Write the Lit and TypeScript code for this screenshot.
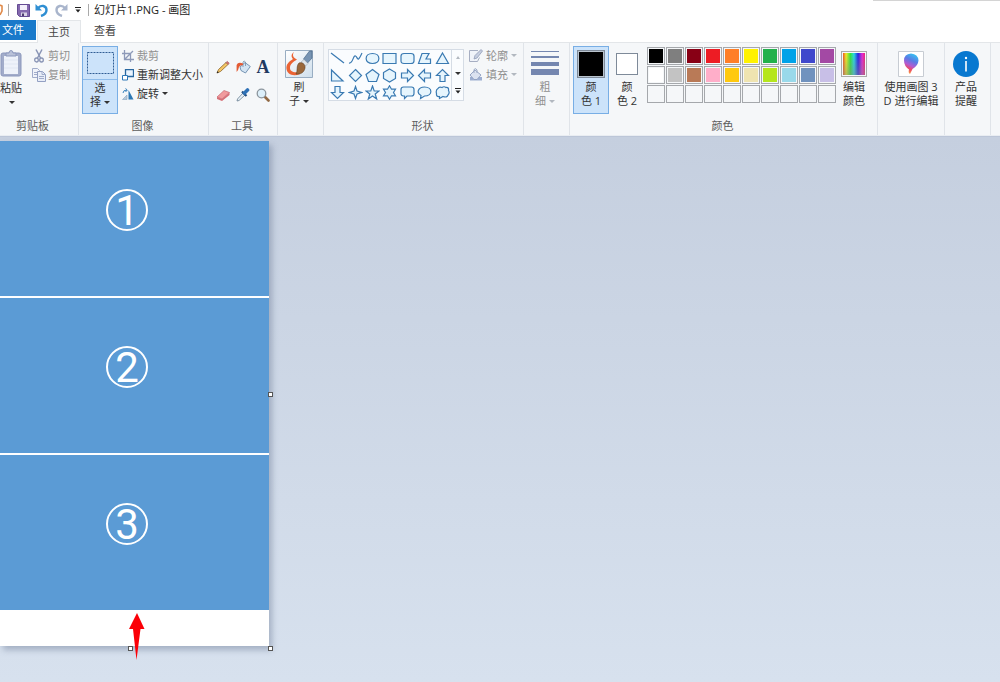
import { LitElement, html, css, svg, nothing, TemplateResult } from "lit";
import { customElement, property } from "lit/decorators.js";

const icon = (w: number, h: number, body: unknown) =>
  html`<svg width=${w} height=${h} viewBox="0 0 ${w} ${h}" fill="none" aria-hidden="true">${body}</svg>`;

const icons = {
  app: icon(3, 14, svg`<path d="M0 2L2 3V8L0 12" stroke="#e08a4a" stroke-width="1.6"/>`),
  save: icon(13, 13, svg`<path d="M.5.5h12v12H2.5l-2-2z" fill="#8468ae" stroke="#654b93"/><path d="M3 1h7v5H3z" fill="#f3effa"/><path d="M4 8.500h6V12H4z" fill="#d9d2e6"/><path d="M5 9.500h2V12H5z" fill="#4d3b70"/>`),
  undo: icon(14, 14, svg`<path d="M.5 1V7.500H7z" fill="#2f8fd3"/><path d="M3 5C6 1.500 11.500 2.500 11.500 7C11.500 10.500 9 12 6 13" stroke="#2f8fd3" stroke-width="2.400"/>`),
  redo: icon(14, 14, svg`<path d="M13.500 1V7.500H7z" fill="#a9b5cc"/><path d="M11 5C8 1.500 2.500 2.500 2.500 7C2.500 10.500 5 12 8 13" stroke="#a9b5cc" stroke-width="2.400"/>`),
  more: icon(8, 6, svg`<path d="M1 .5h6" stroke="#222"/><path d="M1.500 2.500h5L4 5.500z" fill="#222"/>`),
  paste: icon(22, 28, svg`<rect x="1" y="3" width="20" height="23" rx="2" fill="#a2acca" stroke="#8c98bd"/><path d="M4 6h14v18H4z" fill="#eef2fa"/><path d="M4 10h14M4 14h14M4 18h14" stroke="#e0e6f2"/><path d="M6 6V3h3Q9 .5 11 .5T13 3h3v3z" fill="#b9c1d8" stroke="#8c98bd"/>`),
  cut: icon(14, 14, svg`<path d="M4 .5L8.500 9M10 .5L5.500 9" stroke="#8894b5" stroke-width="1.500"/><ellipse cx="4.500" cy="11" rx="1.800" ry="2" stroke="#8894b5" stroke-width="1.300"/><ellipse cx="9.500" cy="11" rx="1.800" ry="2" stroke="#8894b5" stroke-width="1.300"/>`),
  copy: icon(14, 14, svg`<path d="M.5.5h5l2 2v7h-7z" fill="#f0f3fa" stroke="#a1acca"/><path d="M5.500 3.500h5l3 3v7h-8z" fill="#e9eef8" stroke="#93a0c3"/><path d="M10 3.500v3h3M7 8.500h5M7 10.500h5M2 4.500h3M2 6.500h3" stroke="#a1acca"/>`),
  select: icon(27, 22, svg`<rect x=".5" y=".5" width="26" height="21" stroke="#305d94" stroke-dasharray="2 1"/>`),
  crop: icon(12, 12, svg`<path d="M2.500 0v9.500H12M0 3.500h8.500V12M3 9l8-8" stroke="#8d99b8" stroke-width="1.300"/>`),
  resize: icon(12, 12, svg`<path d="M3.500.5h8v7h-8z" fill="#eaf4fe" stroke="#29679f" stroke-width="1.300"/><path d="M.5 6.500h5v4.500h-5z" fill="#fff" stroke="#2e78b8"/>`),
  rotate: icon(12, 12, svg`<path d="M6.500 11.500V2l5 9.500z" fill="#2c78b4"/><path d="M5 11.500V7L.5 11.500z" fill="#b8cadb" stroke="#86a3be" stroke-width=".6"/><path d="M1 5Q1 2 5 2M3.500.5L5.300 2 3.500 4" stroke="#3b83bd"/>`),
  pencil: icon(14, 14, svg`<path d="M1 13l1.500-3.500L10 2.500l2 2L4.500 11.500z" fill="#f5c765" stroke="#8a632c" stroke-width=".8"/><path d="M10 2.500l1.300-1.200 2 2L12 4.500z" fill="#d77070" stroke="#94585a" stroke-width=".5"/><path d="M.7 13.300l.8-2 1.300 1.200z" fill="#222"/>`),
  fill: icon(15, 14, svg`<path d="M4 7l5-4.500 5.300 4L9.500 13 5 10.500z" fill="#d3e4f3" stroke="#5a7ea2" stroke-width=".8"/><path d="M7 7V2Q8 0 9.500 2v4" stroke="#7590aa" stroke-width=".8"/><path d="M7 3.500Q2 1.500 .6 5V12Q2.500 10 3 7Q4 5 7 5z" fill="#e35b35"/>`),
  eraser: icon(14, 14, svg`<path d="M1 9l7-6.500 5.500 2L6 11z" fill="#f19a9d" stroke="#bd5b65" stroke-width=".6"/><path d="M1 9l5 2v2L1 11zM6 11l7.500-6.500v2.500L6 13z" fill="#d66f77"/>`),
  picker: icon(14, 14, svg`<path d="M7 5L1.500 11 1 13l2-.5L9 7" fill="#e8f1f8" stroke="#667c91" stroke-width=".8"/><path d="M6 3.500L10.500 8" stroke="#244f80" stroke-width="2.200"/><path d="M8.500 5l3-3" stroke="#2e71b6" stroke-width="3.600" stroke-linecap="round"/>`),
  zoom: icon(14, 14, svg`<path d="M9 9l3.500 3.500" stroke="#916944" stroke-width="2.600" stroke-linecap="round"/><circle cx="5.500" cy="5.500" r="4.300" fill="#dceffa" stroke="#8b959d" stroke-width="1.300"/>`),
  brush: icon(28, 28, svg`<defs><linearGradient id="paper" x2="1" y2="1"><stop stop-color="#fff"/><stop offset="1" stop-color="#cfdfec"/></linearGradient></defs><path d="M.5.500h27v27H.5z" fill="url(#paper)" stroke="#98adc2"/><path d="M9 2C6 4 6 7 8 9C3 12 1 15 1.500 19C2 24 8 27 15 24L14 22C8 23 5 21 5 18C5 14 8 12 12 9.500C8 8 7 5 9 2z" fill="#ea6334"/><path d="M27 1v7l-4.500 5-4-4 6-8z" fill="#7794b3" stroke="#4b6888" stroke-width=".7"/><path d="M19 9.500l4 4-2.500 2.500-4.500-4z" fill="#dfe5ea" stroke="#929eab" stroke-width=".5"/><path d="M14 13C17 12 20.500 14 20 18C19 23 15 24.500 11 24C13 21 11 16 14 13z" fill="#9a683b" stroke="#66401f" stroke-width=".6"/>`),
  outline: icon(14, 13, svg`<path d="M9 1.500H.500v11h8l2-4" fill="#f0f3f9" stroke="#a6aec2"/><path d="M5 10l1-3.500 6-6 1.500 1.500L8 9z" fill="#c6cee0" stroke="#929db9" stroke-width=".8"/>`),
  fillShape: icon(14, 13, svg`<path d="M1 9h12v3.500H1z" fill="#9daed0"/><path d="M1 7l5-5 6 5-4 4.500H5z" fill="#dbe2f0" stroke="#8d9dbf" stroke-width=".9"/><path d="M5 5V1.500Q7-.5 8 2v3" stroke="#9ba9c5"/>`),
  weight: icon(28, 25, svg`<path d="M0 .5h28" stroke="#7587b0"/><path d="M0 6h28" stroke="#7587b0" stroke-width="2"/><path d="M0 13h28" stroke="#7587b0" stroke-width="4"/><path d="M0 21h28" stroke="#7587b0" stroke-width="6"/>`),
  spectrum: html`<span class="spectrum"></span>`,
  paint3d: icon(26, 26, svg`<defs><linearGradient id="pin" x1=".7" y1="0" x2=".35" y2="1"><stop stop-color="#34c6f2"/><stop offset=".35" stop-color="#5a7be5"/><stop offset=".6" stop-color="#b25bd2"/><stop offset=".78" stop-color="#ee4965"/><stop offset="1" stop-color="#f8a63c"/></linearGradient></defs><path d="M.5.500h25v25H.5z" fill="#fff" stroke="#c7ccd3"/><path d="M13 2.500Q20 3 20.500 9.500Q20 15 14.500 18L12 23Q10 22 11 18.500Q6 15 6 9.500Q6 3 13 2.500z" fill="url(#pin)"/>`),
  info: icon(26, 26, svg`<circle cx="13" cy="13" r="13" fill="#0878d0"/><circle cx="13" cy="7" r="1.200" fill="#fff"/><path d="M13 10v10.500" stroke="#fff" stroke-width="1.600"/>`),
};

const shapes: [string, string][] = [
  ["直线", "M1 2L14 12"],
  ["曲线", "M1 12C5 13 5 4 7.500 5S9 13 14 2"],
  ["椭圆形", "M7.500 2.500C16 2.500 16 12.500 7.500 12.500S-1 2.500 7.500 2.500z"],
  ["矩形", "M1 2.500H14V12.500H1z"],
  ["圆角矩形", "M4 2.500H11Q14 2.500 14 5V10Q14 12.500 11 12.500H4Q1 12.500 1 10V5Q1 2.500 4 2.500z"],
  ["多边形", "M5 2.500H12L9 8H13.500V12.500H1.500z"],
  ["三角形", "M7.500 2L13.500 12.500H1.500z"],
  ["直角三角形", "M1.500 2L13 13H1.500z"],
  ["菱形", "M7.500 1.500L13.500 7.500L7.500 13.500L1.500 7.500z"],
  ["五边形", "M7.500 1.500L14 6.500L11.500 13.500H3.500L1 6.500z"],
  ["六边形", "M7.500 1L13.500 4.500V10.500L7.500 14L1.500 10.500V4.500z"],
  ["右箭头", "M1.500 5H7.500V1.500L13.500 7.500L7.500 13.500V10H1.500z"],
  ["左箭头", "M13.500 5H7.500V1.500L1.500 7.500L7.500 13.500V10H13.500z"],
  ["上箭头", "M5 13.500V7.500H1.500L7.500 1.500L13.500 7.500H10V13.500z"],
  ["下箭头", "M5 1.500V7.500H1.500L7.500 13.500L13.500 7.500H10V1.500z"],
  ["四角星", "M7.500 1.500L9 6L13.500 7.500L9 9L7.500 13.500L6 9L1.500 7.500L6 6z"],
  ["五角星", "M7.500 1L9.200 6H14L10.200 9L11.700 14L7.500 11L3.300 14L4.800 9L1 6H5.800z"],
  ["六角星", "M7.500 .8L9.500 4.200H13.500L11.500 7.500L13.500 10.800H9.500L7.500 14.200L5.500 10.800H1.500L3.500 7.500L1.500 4.200H5.500z"],
  ["圆角矩形标注", "M3.500 2H11.500Q14 2 14 4.500V8.500Q14 11 11.500 11H7L4.500 13.500V11H3.500Q1 11 1 8.500V4.500Q1 2 3.500 2z"],
  ["椭圆形标注", "M4 10.500C-1 8 1 2 7.500 2C16 2 16 11 7.500 11L3.500 13.500z"],
  ["云形标注", "M3 3.500Q4 1.500 7 2.500Q9 1 11 2.500Q14 2 13.500 5.500Q15 8 13 10Q12 13 8 11.500L4.500 13.500L4.500 11.500Q1 12 1.500 8.500Q.500 5 3 3.500z"],
];

const palette: [string, string][] = [
  ["黑色", "#000000"], ["灰色-50%", "#7f7f7f"], ["深红色", "#880015"], ["红色", "#ed1c24"], ["橙色", "#ff7f27"],
  ["黄色", "#fff200"], ["绿色", "#22b14c"], ["青绿", "#00a2e8"], ["靛青", "#3f48cc"], ["紫色", "#a349a4"],
  ["白色", "#ffffff"], ["灰色-25%", "#c3c3c3"], ["褐色", "#b97a57"], ["玫瑰色", "#ffaec9"], ["金色", "#ffc90e"],
  ["浅黄色", "#efe4b0"], ["酸橙色", "#b5e61d"], ["淡青绿色", "#99d9ea"], ["蓝灰色", "#7092be"], ["淡紫色", "#c8bfe7"],
];

const shared = css`
  * { box-sizing: border-box; }
  button { margin: 0; padding: 0; border: 0; background: none; font: inherit; color: inherit; }
  svg { display: block; flex: none; }
  .caret { display: inline-block; border: 3px solid transparent; border-top-color: currentColor; border-bottom: 0; vertical-align: 2px; }
`;

@customElement("ribbon-group")
class RibbonGroup extends LitElement {
  @property() label = "";
  static styles = css`
    :host { box-sizing: border-box; display: flex; flex-direction: column; flex: none; border-right: 1px solid #e0e4e9; padding: 3px 3px 0; }
    .body { display: flex; align-items: flex-start; height: 73px; }
    .label { text-align: center; color: #5c5c5c; line-height: 14px; padding-right: 2px; }
  `;
  render() {
    return html`<div class="body"><slot></slot></div>
      ${this.label ? html`<div class="label">${this.label}</div>` : nothing}`;
  }
}

@customElement("paint-ribbon")
class PaintRibbon extends LitElement {
  static styles = [shared, css`
    :host { display: flex; height: 94px; background: #f5f7f9; border-top: 1px solid #e3e6e9; border-bottom: 1px solid #e9edf2; color: #333; overflow: hidden; }
    .clipboard { width: 79px; padding: 3px 11px 0 0; }
    .clipboard-tools { margin-left: 8px; }
    .clipboard-tools .small { gap: 2px; }
    .image { width: 130px; }
    .image-tools { margin-left: 4px; }
    .tools { width: 69px; }
    .brushes { width: 46px; }
    .shapes { width: 200px; }
    .size { width: 46px; }
    .colors { width: 308px; }
    .three-d { width: 67px; }
    .product { width: 46px; }
    .big { display: flex; flex-direction: column; align-items: center; width: 36px; height: 68px; line-height: 14px; border: 1px solid transparent; white-space: nowrap; flex: none; }
    .picture { display: flex; align-items: center; justify-content: center; height: 33px; width: 100%; }
    .big.active { background: #cce3fa; border-color: #78aee5; }
    .split .picture { border-bottom: 1px solid #8dbbea; margin-bottom: 1px; }
    .paste { width: 24px; align-items: flex-start; border-left: 0; }
    .paste .picture { height: 34px; justify-content: flex-start; }
    .paste .caret { margin-left: 9px; }
    .wide { width: 60px; }
    .rows { display: flex; flex-direction: column; }
    .small { display: flex; align-items: center; gap: 3px; height: 19px; white-space: nowrap; }
    .disabled { color: #909090; }
    .disabled .caret { border-top-color: #b2b8c0; }
    .tool-grid { display: grid; grid-template-columns: repeat(3, 20px); grid-auto-rows: 28px; padding: 7px 0 0 1px; }
    .tool-grid button { display: grid; place-items: center; }
    .tool-grid .letter { font: bold 18px/20px "Liberation Serif", serif; color: #1f3a61; }
    .gallery { display: flex; width: 136px; height: 52px; margin: 3px 5px 0 1px; border: 1px solid #d5dce5; background: #fafcfe; flex: none; }
    .shape-grid { flex: 1; display: grid; grid-template-columns: repeat(7, 1fr); grid-auto-rows: 17px; }
    .shape-grid button { display: grid; place-items: center; }
    .shape-grid path { fill: #e6f5fd; stroke: #3a7ab2; stroke-width: 1.2; }
    .shape-grid .open path { fill: none; }
    .scroll { display: grid; width: 12px; border-left: 1px solid #d5dce5; }
    .scroll button { display: grid; place-items: center; }
    .up { border: 2px solid transparent; border-bottom: 3px solid #b2b8c0; border-top: 0; }
    .swatch { width: 28px; height: 28px; background: #000; border: 1px solid #7e8a99; box-shadow: inset 0 0 0 1px #b9c4ce; }
    .swatch.second { width: 22px; height: 22px; background: #fff; box-shadow: none; }
    .palette { display: grid; grid-template-columns: repeat(10, 18px); gap: 1px; margin: 1px 0 0 2px; }
    .cell { width: 18px; height: 18px; border: 1px solid #a5a8ac; }
    .fill { display: block; height: 16px; border: 1px solid #f5f7f9; }
    .spectrum { width: 26px; height: 26px; padding: 1px; border: 1px solid #aaa; background-clip: content-box; background-image: linear-gradient(transparent, #8888), linear-gradient(90deg, #f02020, #f5ee20 17%, #2ee83c 35%, #25dce8 50%, #2020e8 67%, #e825d8 84%, #f02050); }
  `];

  private big(cls: string, picture: unknown, first: string, second: unknown) {
    return html`<button class="big ${cls}" ?disabled=${cls.includes("disabled")}>
      <span class="picture">${picture}</span><span>${first}</span><span>${second}</span>
    </button>`;
  }

  private small(picture: TemplateResult, text: string, disabled = false, menu = false) {
    return html`<button class="small ${disabled ? "disabled" : ""}" ?disabled=${disabled}>
      ${picture}<span>${text}</span>${menu ? html`<span class="caret"></span>` : nothing}
    </button>`;
  }

  private tool(name: string, picture: unknown) {
    return html`<button aria-label=${name}>${picture}</button>`;
  }

  render() {
    const caret = html`<span class="caret"></span>`;
    const cells = Array.from({ length: 30 }, (_, i) => palette[i]);
    return html`
      <ribbon-group class="clipboard" label="剪贴板">
        ${this.big("paste", icons.paste, "粘贴", caret)}
        <div class="rows clipboard-tools">
          ${this.small(icons.cut, "剪切", true)}${this.small(icons.copy, "复制", true)}
        </div>
      </ribbon-group>
      <ribbon-group class="image" label="图像">
        ${this.big("active split", icons.select, "选", html`择 ${caret}`)}
        <div class="rows image-tools">
          ${this.small(icons.crop, "裁剪", true)}
          ${this.small(icons.resize, "重新调整大小")}
          ${this.small(icons.rotate, "旋转", false, true)}
        </div>
      </ribbon-group>
      <ribbon-group class="tools" label="工具">
        <div class="tool-grid">
          ${this.tool("铅笔", icons.pencil)}${this.tool("填充", icons.fill)}
          <button class="letter">A</button>
          ${this.tool("橡皮擦", icons.eraser)}${this.tool("颜色选取器", icons.picker)}${this.tool("放大镜", icons.zoom)}
        </div>
      </ribbon-group>
      <ribbon-group class="brushes">
        ${this.big("", icons.brush, "刷", html`子 ${caret}`)}
      </ribbon-group>
      <ribbon-group class="shapes" label="形状">
        <div class="gallery">
          <div class="shape-grid">
            ${shapes.map(([name, d], i) => html`<button class=${i < 2 ? "open" : ""} aria-label=${name}>
              ${icon(15, 15, svg`<path d=${d} />`)}</button>`)}
          </div>
          <div class="scroll">
            <button aria-label="向上"><span class="up"></span></button>
            <button aria-label="向下">${caret}</button>
            <button aria-label="更多">${icons.more}</button>
          </div>
        </div>
        <div class="rows">
          ${this.small(icons.outline, "轮廓", true, true)}${this.small(icons.fillShape, "填充", true, true)}
        </div>
      </ribbon-group>
      <ribbon-group class="size">
        ${this.big("disabled", icons.weight, "粗", html`细 ${caret}`)}
      </ribbon-group>
      <ribbon-group class="colors" label="颜色">
        ${this.big("active", html`<span class="swatch"></span>`, "颜", "色 1")}
        ${this.big("", html`<span class="swatch second"></span>`, "颜", "色 2")}
        <div class="palette">
          ${cells.map((c) => html`<button class="cell" aria-label=${c ? c[0] : "自定义"}>
            ${c ? html`<span class="fill" style="background:${c[1]}"></span>` : nothing}</button>`)}
        </div>
        ${this.big("", icons.spectrum, "编辑", "颜色")}
      </ribbon-group>
      <ribbon-group class="three-d">
        ${this.big("wide", icons.paint3d, "使用画图 3", "D 进行编辑")}
      </ribbon-group>
      <ribbon-group class="product">
        ${this.big("", icons.info, "产品", "提醒")}
      </ribbon-group>
    `;
  }
}

@customElement("paint-canvas")
class PaintCanvas extends LitElement {
  static styles = [shared, css`
    :host { display: block; background: linear-gradient(#c5cfdf, #d7e1ee); padding-top: 4px; border-top: 1px solid #bcc6d8; overflow: hidden; }
    .sheet { position: relative; display: flex; flex-direction: column; gap: 2px; width: 269px; padding-bottom: 36px; background: #fff; box-shadow: 3px 4px 6px rgba(90, 105, 135, 0.4); }
    .slide { height: 155px; padding: 48px 0 0 106px; background: #5b9bd5; }
    .number { display: grid; place-items: center; width: 42px; height: 42px; border: 2px solid #fff; border-radius: 50%; color: #fff; font: 42px/40px Roboto, sans-serif; }
    .handle { position: absolute; width: 5px; height: 5px; background: #fff; border: 1px solid #555; }
    .right { right: -4px; top: calc(50% - 2px); }
    .corner { right: -4px; bottom: -5px; }
    .bottom { left: 128px; bottom: -5px; }
    .arrow { position: absolute; left: 129px; bottom: -14px; }
  `];
  render() {
    return html`<div class="sheet">
      ${[1, 2, 3].map((n) => html`<div class="slide"><div class="number">${n}</div></div>`)}
      <span class="handle right"></span>
      <span class="handle corner"></span>
      <span class="handle bottom"></span>
      <span class="arrow">${icon(16, 47, svg`<path d="M8 0L15.500 16H11.500L7.500 47L4 16H0z" fill="#fb0007"/>`)}</span>
    </div>`;
  }
}

@customElement("app-root")
class AppRoot extends LitElement {
  static styles = [shared, css`
    :host { display: flex; flex-direction: column; min-height: 100vh; background: #fff; font: 11px/14px "Open Sans", "Noto Sans CJK SC", sans-serif; color: #222; }
    .title-bar { display: flex; align-items: center; height: 20px; gap: 5px; }
    .title-bar button { display: grid; place-items: center; width: 14px; height: 14px; }
    .title-bar .menu { width: 10px; }
    .rule { width: 1px; height: 12px; background: #aaa; }
    .lead { margin-right: 2px; }
    .title { margin: 0; font: inherit; white-space: nowrap; }
    .window-edge { align-self: flex-start; margin-left: auto; width: 127px; height: 1px; background: #d4d4d4; }
    .tabs { display: flex; height: 22px; }
    .tab { width: 44px; text-align: center; color: #444; }
    .file { width: 36px; height: 20px; padding-left: 2px; text-align: left; background: #1979ca; color: #fff; }
    .current { height: 23px; margin-left: 1px; background: #f5f7f9; border: 1px solid #e3e6e9; border-bottom: 0; position: relative; }
    .view { margin-left: 2px; }
    paint-canvas { flex: 1; }
  `];
  render() {
    return html`
      <header class="title-bar">
        ${icons.app}<span class="rule lead"></span>
        <button aria-label="保存">${icons.save}</button>
        <button aria-label="撤消">${icons.undo}</button>
        <button aria-label="重做">${icons.redo}</button>
        <button class="menu" aria-label="自定义快速访问工具栏">${icons.more}</button>
        <span class="rule"></span>
        <h1 class="title">幻灯片1.PNG - 画图</h1>
        <span class="window-edge"></span>
      </header>
      <nav class="tabs">
        <button class="tab file">文件</button>
        <button class="tab current">主页</button>
        <button class="tab view">查看</button>
      </nav>
      <paint-ribbon></paint-ribbon>
      <paint-canvas></paint-canvas>
    `;
  }
}
